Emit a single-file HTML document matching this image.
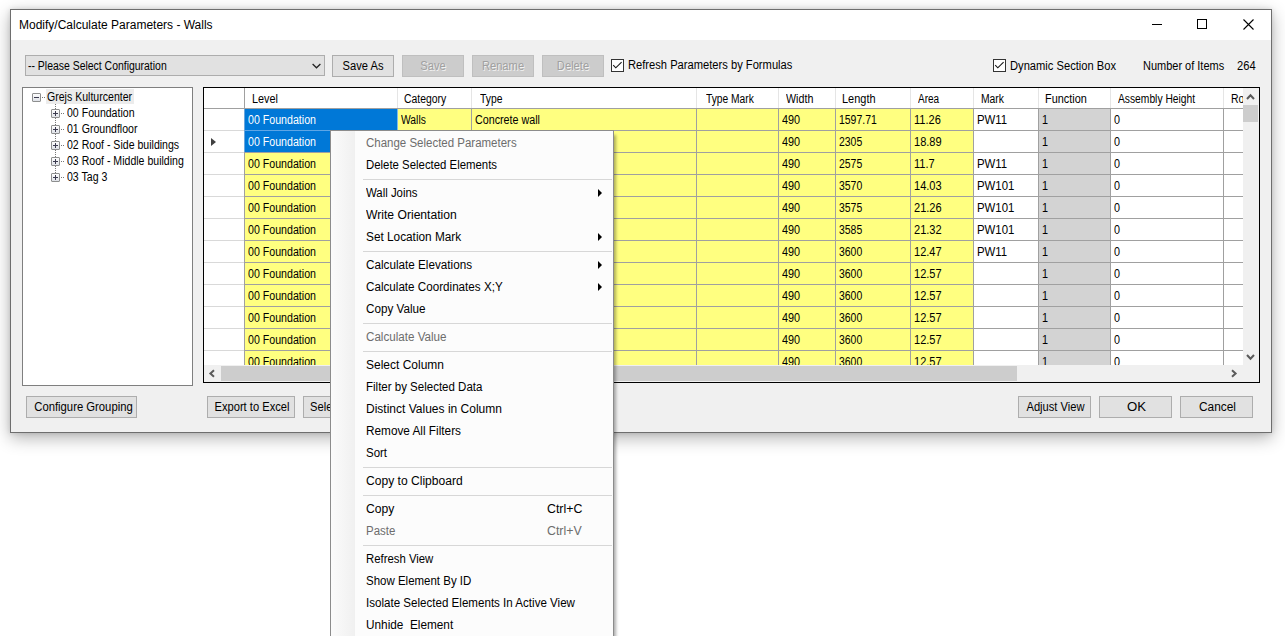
<!DOCTYPE html><html><head><meta charset="utf-8"><style>
*{margin:0;padding:0;box-sizing:border-box}
html,body{width:1285px;height:636px;overflow:hidden;background:#fff;font-family:"Liberation Sans",sans-serif;color:#000}
.a{position:absolute}
.t{position:absolute;white-space:pre;font-size:12px;line-height:12px;transform-origin:0 0}
.btn{position:absolute;height:22px;background:#e1e1e1;border:1px solid #adadad}
.dis{background:#cccccc;border-color:#bfbfbf}
.chk{position:absolute;width:13px;height:13px;border:1px solid #333;background:#fff}
.mi{position:absolute;left:366px;font-size:12px;line-height:22px;white-space:pre;transform-origin:0 0}
.sep{position:absolute;left:363px;width:249px;height:1px;background:#d7d7d7}
.arr{position:absolute;left:598px;width:0;height:0;border-top:4px solid transparent;border-bottom:4px solid transparent;border-left:4px solid #000}
</style></head><body>
<div class="a" style="left:10px;top:9px;width:1262px;height:424px;box-shadow:0 5px 16px rgba(0,0,0,0.30), 0 0 5px rgba(0,0,0,0.12)"></div>
<div class="a" style="left:10px;top:9px;width:1262px;height:424px;border:1px solid #6e6e6e;background:#f0f0f0"></div>
<div class="a" style="left:11px;top:10px;width:1260px;height:30px;background:#fff"></div>
<div class="t" style="left:19px;top:19px;">Modify/Calculate Parameters - Walls</div>
<div class="a" style="left:1152px;top:24px;width:10px;height:1px;background:#000"></div>
<div class="a" style="left:1197px;top:19px;width:10px;height:10px;border:1px solid #000"></div>
<svg class="a" style="left:1243px;top:19px" width="11" height="11" viewBox="0 0 11 11"><path d="M0.5 0.5L10.5 10.5M10.5 0.5L0.5 10.5" stroke="#000" stroke-width="1.1" fill="none"/></svg>
<div class="a" style="left:25px;top:55px;width:300px;height:21px;background:#e1e1e1;border:1px solid #adadad"></div>
<div class="t" style="left:28px;top:60px;transform:scaleX(0.87);">-- Please Select Configuration</div>
<svg class="a" style="left:312px;top:63px" width="9" height="6" viewBox="0 0 9 6"><path d="M0.6 1L4.5 4.8L8.4 1" stroke="#222" stroke-width="1.25" fill="none"/></svg>
<div class="btn" style="left:332px;top:55px;width:62px"></div>
<div class="t" style="left:332px;top:60px;width:62px;text-align:center;transform:scaleX(0.93);transform-origin:50% 0;color:#000;">Save As</div>
<div class="btn dis" style="left:402px;top:55px;width:62px"></div>
<div class="t" style="left:402px;top:60px;width:62px;text-align:center;transform:scaleX(0.93);transform-origin:50% 0;color:#a0a0a0;text-shadow:1px 1px 0 #f2f2f2;">Save</div>
<div class="btn dis" style="left:472px;top:55px;width:62px"></div>
<div class="t" style="left:472px;top:60px;width:62px;text-align:center;transform:scaleX(0.93);transform-origin:50% 0;color:#a0a0a0;text-shadow:1px 1px 0 #f2f2f2;">Rename</div>
<div class="btn dis" style="left:542px;top:55px;width:62px"></div>
<div class="t" style="left:542px;top:60px;width:62px;text-align:center;transform:scaleX(0.93);transform-origin:50% 0;color:#a0a0a0;text-shadow:1px 1px 0 #f2f2f2;">Delete</div>
<div class="chk" style="left:611px;top:59px"></div>
<svg class="a" style="left:611px;top:59px" width="13" height="13" viewBox="0 0 13 13"><path d="M2.2 6.2L4.8 8.8L10.6 3.2" stroke="#1a1a1a" stroke-width="1.15" fill="none"/></svg>
<div class="t" style="left:628px;top:59px;transform:scaleX(0.93);">Refresh Parameters by Formulas</div>
<div class="chk" style="left:993px;top:59px"></div>
<svg class="a" style="left:993px;top:59px" width="13" height="13" viewBox="0 0 13 13"><path d="M2.2 6.2L4.8 8.8L10.6 3.2" stroke="#1a1a1a" stroke-width="1.15" fill="none"/></svg>
<div class="t" style="left:1009.5px;top:60px;transform:scaleX(0.93);">Dynamic Section Box</div>
<div class="t" style="left:1143px;top:60px;transform:scaleX(0.915);">Number of Items</div>
<div class="t" style="left:1236.5px;top:60px;transform:scaleX(0.93);">264</div>
<div class="a" style="left:22px;top:87px;width:171px;height:299px;background:#fff;border:1px solid #7f7f7f"></div>
<div class="a" style="left:46px;top:89px;width:88px;height:15px;background:#ececec"></div>
<div class="a" style="left:32px;top:93px;width:9px;height:9px;border:1px solid #8e8f8f;border-radius:1px;background:linear-gradient(#fdfdfd,#dfe2e8)"></div>
<div class="a" style="left:34px;top:97px;width:5px;height:1px;background:#3b3b4f"></div>
<div class="a" style="left:42px;top:97px;width:4px;height:1px;background:repeating-linear-gradient(90deg,#777 0 1px,transparent 1px 2px)"></div>
<div class="t" style="left:47px;top:91px;transform:scaleX(0.88);">Grejs Kulturcenter</div>
<div class="a" style="left:55px;top:104px;width:1px;height:73px;background:repeating-linear-gradient(180deg,#777 0 1px,transparent 1px 2px)"></div>
<div class="a" style="left:51px;top:109px;width:9px;height:9px;border:1px solid #8e8f8f;border-radius:1px;background:linear-gradient(#fdfdfd,#dfe2e8)"></div>
<div class="a" style="left:53px;top:113px;width:5px;height:1px;background:#3b3b4f"></div>
<div class="a" style="left:55px;top:111px;width:1px;height:5px;background:#3b3b4f"></div>
<div class="a" style="left:61px;top:113px;width:4px;height:1px;background:repeating-linear-gradient(90deg,#777 0 1px,transparent 1px 2px)"></div>
<div class="t" style="left:66.5px;top:107px;transform:scaleX(0.88);">00 Foundation</div>
<div class="a" style="left:51px;top:125px;width:9px;height:9px;border:1px solid #8e8f8f;border-radius:1px;background:linear-gradient(#fdfdfd,#dfe2e8)"></div>
<div class="a" style="left:53px;top:129px;width:5px;height:1px;background:#3b3b4f"></div>
<div class="a" style="left:55px;top:127px;width:1px;height:5px;background:#3b3b4f"></div>
<div class="a" style="left:61px;top:129px;width:4px;height:1px;background:repeating-linear-gradient(90deg,#777 0 1px,transparent 1px 2px)"></div>
<div class="t" style="left:66.5px;top:123px;transform:scaleX(0.88);">01 Groundfloor</div>
<div class="a" style="left:51px;top:141px;width:9px;height:9px;border:1px solid #8e8f8f;border-radius:1px;background:linear-gradient(#fdfdfd,#dfe2e8)"></div>
<div class="a" style="left:53px;top:145px;width:5px;height:1px;background:#3b3b4f"></div>
<div class="a" style="left:55px;top:143px;width:1px;height:5px;background:#3b3b4f"></div>
<div class="a" style="left:61px;top:145px;width:4px;height:1px;background:repeating-linear-gradient(90deg,#777 0 1px,transparent 1px 2px)"></div>
<div class="t" style="left:66.5px;top:139px;transform:scaleX(0.88);">02 Roof - Side buildings</div>
<div class="a" style="left:51px;top:157px;width:9px;height:9px;border:1px solid #8e8f8f;border-radius:1px;background:linear-gradient(#fdfdfd,#dfe2e8)"></div>
<div class="a" style="left:53px;top:161px;width:5px;height:1px;background:#3b3b4f"></div>
<div class="a" style="left:55px;top:159px;width:1px;height:5px;background:#3b3b4f"></div>
<div class="a" style="left:61px;top:161px;width:4px;height:1px;background:repeating-linear-gradient(90deg,#777 0 1px,transparent 1px 2px)"></div>
<div class="t" style="left:66.5px;top:155px;transform:scaleX(0.88);">03 Roof - Middle building</div>
<div class="a" style="left:51px;top:173px;width:9px;height:9px;border:1px solid #8e8f8f;border-radius:1px;background:linear-gradient(#fdfdfd,#dfe2e8)"></div>
<div class="a" style="left:53px;top:177px;width:5px;height:1px;background:#3b3b4f"></div>
<div class="a" style="left:55px;top:175px;width:1px;height:5px;background:#3b3b4f"></div>
<div class="a" style="left:61px;top:177px;width:4px;height:1px;background:repeating-linear-gradient(90deg,#777 0 1px,transparent 1px 2px)"></div>
<div class="t" style="left:66.5px;top:171px;transform:scaleX(0.88);">03 Tag 3</div>
<div class="btn" style="left:26px;top:396px;width:111px"></div>
<div class="t" style="left:27.5px;top:401px;width:111px;text-align:center;transform:scaleX(0.94);transform-origin:50% 0;color:#000;">Configure Grouping</div>
<div class="btn" style="left:207px;top:396px;width:88px"></div>
<div class="t" style="left:207.5px;top:401px;width:88px;text-align:center;transform:scaleX(0.93);transform-origin:50% 0;color:#000;">Export to Excel</div>
<div class="btn" style="left:1018px;top:396px;width:73px"></div>
<div class="t" style="left:1018.5px;top:401px;width:73px;text-align:center;transform:scaleX(0.93);transform-origin:50% 0;color:#000;">Adjust View</div>
<div class="btn" style="left:1099px;top:396px;width:73px"></div>
<div class="t" style="left:1099.5px;top:401px;width:73px;text-align:center;transform:scaleX(1.1);transform-origin:50% 0;color:#000;">OK</div>
<div class="btn" style="left:1180px;top:396px;width:73px"></div>
<div class="t" style="left:1181px;top:401px;width:73px;text-align:center;transform:scaleX(0.99);transform-origin:50% 0;color:#000;">Cancel</div>
<div class="btn" style="left:303px;top:396px;width:120px"></div>
<div class="t" style="left:310px;top:401px;transform:scaleX(0.93);color:#000;">Select Elements</div>
<div class="a" style="left:203px;top:87px;width:1057px;height:296px;background:#fff;border:1px solid #000"></div>
<div class="a" style="left:204px;top:88px;width:1039px;height:277px;overflow:hidden">
<div class="a" style="left:0;top:0;width:1100px;height:20px;background:#fff"></div>
<div class="a" style="left:40px;top:0;width:1px;height:20px;background:#a0a0a0"></div>
<div class="a" style="left:193px;top:0;width:1px;height:20px;background:#e5e5e5"></div>
<div class="t" style="left:47.900000000000006px;top:5px;transform:scaleX(0.904);">Level</div>
<div class="a" style="left:267px;top:0;width:1px;height:20px;background:#e5e5e5"></div>
<div class="t" style="left:200.2px;top:5px;transform:scaleX(0.867);">Category</div>
<div class="a" style="left:492px;top:0;width:1px;height:20px;background:#e5e5e5"></div>
<div class="t" style="left:275.5px;top:5px;transform:scaleX(0.862);">Type</div>
<div class="a" style="left:574px;top:0;width:1px;height:20px;background:#e5e5e5"></div>
<div class="t" style="left:501.5px;top:5px;transform:scaleX(0.854);">Type Mark</div>
<div class="a" style="left:631px;top:0;width:1px;height:20px;background:#e5e5e5"></div>
<div class="t" style="left:582.0px;top:5px;transform:scaleX(0.893);">Width</div>
<div class="a" style="left:706px;top:0;width:1px;height:20px;background:#e5e5e5"></div>
<div class="t" style="left:638.3px;top:5px;transform:scaleX(0.914);">Length</div>
<div class="a" style="left:769px;top:0;width:1px;height:20px;background:#e5e5e5"></div>
<div class="t" style="left:714.4px;top:5px;transform:scaleX(0.832);">Area</div>
<div class="a" style="left:834px;top:0;width:1px;height:20px;background:#e5e5e5"></div>
<div class="t" style="left:776.7px;top:5px;transform:scaleX(0.862);">Mark</div>
<div class="a" style="left:906px;top:0;width:1px;height:20px;background:#e5e5e5"></div>
<div class="t" style="left:841.3px;top:5px;transform:scaleX(0.907);">Function</div>
<div class="a" style="left:1019px;top:0;width:1px;height:20px;background:#e5e5e5"></div>
<div class="t" style="left:914px;top:5px;transform:scaleX(0.856);">Assembly Height</div>
<div class="a" style="left:1086px;top:0;width:1px;height:20px;background:#e5e5e5"></div>
<div class="t" style="left:1026.8px;top:5px;transform:scaleX(0.87);">Rotation</div>
<div class="a" style="left:0;top:20px;width:1100px;height:1px;background:#a0a0a0"></div>
<div class="a" style="left:0;top:42px;width:40px;height:1px;background:#d9d9d9"></div>
<div class="a" style="left:41px;top:21px;width:153px;height:21px;background:#0078d7"></div>
<div class="t" style="left:43.5px;top:26px;transform:scaleX(0.886);color:#fff;">00 Foundation</div>
<div class="a" style="left:194px;top:21px;width:74px;height:21px;background:#ffff80"></div>
<div class="t" style="left:196.5px;top:26px;transform:scaleX(0.86);">Walls</div>
<div class="a" style="left:268px;top:21px;width:225px;height:21px;background:#ffff80"></div>
<div class="t" style="left:270.5px;top:26px;transform:scaleX(0.894);">Concrete wall</div>
<div class="a" style="left:493px;top:21px;width:82px;height:21px;background:#ffff80"></div>
<div class="a" style="left:575px;top:21px;width:57px;height:21px;background:#ffff80"></div>
<div class="t" style="left:577.5px;top:26px;transform:scaleX(0.905);">490</div>
<div class="a" style="left:632px;top:21px;width:75px;height:21px;background:#ffff80"></div>
<div class="t" style="left:634.5px;top:26px;transform:scaleX(0.87);">1597.71</div>
<div class="a" style="left:707px;top:21px;width:63px;height:21px;background:#ffff80"></div>
<div class="t" style="left:709.5px;top:26px;transform:scaleX(0.92);">11.26</div>
<div class="a" style="left:770px;top:21px;width:65px;height:21px;background:#fff"></div>
<div class="t" style="left:772.5px;top:26px;transform:scaleX(0.95);">PW11</div>
<div class="a" style="left:835px;top:21px;width:72px;height:21px;background:#d3d3d3"></div>
<div class="t" style="left:837.5px;top:26px;transform:scaleX(0.9);">1</div>
<div class="a" style="left:907px;top:21px;width:113px;height:21px;background:#fff"></div>
<div class="t" style="left:909.5px;top:26px;transform:scaleX(0.9);">0</div>
<div class="a" style="left:1020px;top:21px;width:67px;height:21px;background:#fff"></div>
<div class="a" style="left:41px;top:42px;width:1100px;height:1px;background:#a0a0a0"></div>
<div class="a" style="left:0;top:64px;width:40px;height:1px;background:#d9d9d9"></div>
<div class="a" style="left:41px;top:43px;width:153px;height:21px;background:#0078d7"></div>
<div class="t" style="left:43.5px;top:48px;transform:scaleX(0.886);color:#fff;">00 Foundation</div>
<div class="a" style="left:194px;top:43px;width:74px;height:21px;background:#ffff80"></div>
<div class="a" style="left:268px;top:43px;width:225px;height:21px;background:#ffff80"></div>
<div class="a" style="left:493px;top:43px;width:82px;height:21px;background:#ffff80"></div>
<div class="a" style="left:575px;top:43px;width:57px;height:21px;background:#ffff80"></div>
<div class="t" style="left:577.5px;top:48px;transform:scaleX(0.905);">490</div>
<div class="a" style="left:632px;top:43px;width:75px;height:21px;background:#ffff80"></div>
<div class="t" style="left:634.5px;top:48px;transform:scaleX(0.87);">2305</div>
<div class="a" style="left:707px;top:43px;width:63px;height:21px;background:#ffff80"></div>
<div class="t" style="left:709.5px;top:48px;transform:scaleX(0.92);">18.89</div>
<div class="a" style="left:770px;top:43px;width:65px;height:21px;background:#fff"></div>
<div class="a" style="left:835px;top:43px;width:72px;height:21px;background:#d3d3d3"></div>
<div class="t" style="left:837.5px;top:48px;transform:scaleX(0.9);">1</div>
<div class="a" style="left:907px;top:43px;width:113px;height:21px;background:#fff"></div>
<div class="t" style="left:909.5px;top:48px;transform:scaleX(0.9);">0</div>
<div class="a" style="left:1020px;top:43px;width:67px;height:21px;background:#fff"></div>
<div class="a" style="left:41px;top:64px;width:1100px;height:1px;background:#a0a0a0"></div>
<div class="a" style="left:0;top:86px;width:40px;height:1px;background:#d9d9d9"></div>
<div class="a" style="left:41px;top:65px;width:153px;height:21px;background:#ffff80"></div>
<div class="t" style="left:43.5px;top:70px;transform:scaleX(0.886);">00 Foundation</div>
<div class="a" style="left:194px;top:65px;width:74px;height:21px;background:#ffff80"></div>
<div class="a" style="left:268px;top:65px;width:225px;height:21px;background:#ffff80"></div>
<div class="a" style="left:493px;top:65px;width:82px;height:21px;background:#ffff80"></div>
<div class="a" style="left:575px;top:65px;width:57px;height:21px;background:#ffff80"></div>
<div class="t" style="left:577.5px;top:70px;transform:scaleX(0.905);">490</div>
<div class="a" style="left:632px;top:65px;width:75px;height:21px;background:#ffff80"></div>
<div class="t" style="left:634.5px;top:70px;transform:scaleX(0.87);">2575</div>
<div class="a" style="left:707px;top:65px;width:63px;height:21px;background:#ffff80"></div>
<div class="t" style="left:709.5px;top:70px;transform:scaleX(0.92);">11.7</div>
<div class="a" style="left:770px;top:65px;width:65px;height:21px;background:#fff"></div>
<div class="t" style="left:772.5px;top:70px;transform:scaleX(0.95);">PW11</div>
<div class="a" style="left:835px;top:65px;width:72px;height:21px;background:#d3d3d3"></div>
<div class="t" style="left:837.5px;top:70px;transform:scaleX(0.9);">1</div>
<div class="a" style="left:907px;top:65px;width:113px;height:21px;background:#fff"></div>
<div class="t" style="left:909.5px;top:70px;transform:scaleX(0.9);">0</div>
<div class="a" style="left:1020px;top:65px;width:67px;height:21px;background:#fff"></div>
<div class="a" style="left:41px;top:86px;width:1100px;height:1px;background:#a0a0a0"></div>
<div class="a" style="left:0;top:108px;width:40px;height:1px;background:#d9d9d9"></div>
<div class="a" style="left:41px;top:87px;width:153px;height:21px;background:#ffff80"></div>
<div class="t" style="left:43.5px;top:92px;transform:scaleX(0.886);">00 Foundation</div>
<div class="a" style="left:194px;top:87px;width:74px;height:21px;background:#ffff80"></div>
<div class="a" style="left:268px;top:87px;width:225px;height:21px;background:#ffff80"></div>
<div class="a" style="left:493px;top:87px;width:82px;height:21px;background:#ffff80"></div>
<div class="a" style="left:575px;top:87px;width:57px;height:21px;background:#ffff80"></div>
<div class="t" style="left:577.5px;top:92px;transform:scaleX(0.905);">490</div>
<div class="a" style="left:632px;top:87px;width:75px;height:21px;background:#ffff80"></div>
<div class="t" style="left:634.5px;top:92px;transform:scaleX(0.87);">3570</div>
<div class="a" style="left:707px;top:87px;width:63px;height:21px;background:#ffff80"></div>
<div class="t" style="left:709.5px;top:92px;transform:scaleX(0.92);">14.03</div>
<div class="a" style="left:770px;top:87px;width:65px;height:21px;background:#fff"></div>
<div class="t" style="left:772.5px;top:92px;transform:scaleX(0.95);">PW101</div>
<div class="a" style="left:835px;top:87px;width:72px;height:21px;background:#d3d3d3"></div>
<div class="t" style="left:837.5px;top:92px;transform:scaleX(0.9);">1</div>
<div class="a" style="left:907px;top:87px;width:113px;height:21px;background:#fff"></div>
<div class="t" style="left:909.5px;top:92px;transform:scaleX(0.9);">0</div>
<div class="a" style="left:1020px;top:87px;width:67px;height:21px;background:#fff"></div>
<div class="a" style="left:41px;top:108px;width:1100px;height:1px;background:#a0a0a0"></div>
<div class="a" style="left:0;top:130px;width:40px;height:1px;background:#d9d9d9"></div>
<div class="a" style="left:41px;top:109px;width:153px;height:21px;background:#ffff80"></div>
<div class="t" style="left:43.5px;top:114px;transform:scaleX(0.886);">00 Foundation</div>
<div class="a" style="left:194px;top:109px;width:74px;height:21px;background:#ffff80"></div>
<div class="a" style="left:268px;top:109px;width:225px;height:21px;background:#ffff80"></div>
<div class="a" style="left:493px;top:109px;width:82px;height:21px;background:#ffff80"></div>
<div class="a" style="left:575px;top:109px;width:57px;height:21px;background:#ffff80"></div>
<div class="t" style="left:577.5px;top:114px;transform:scaleX(0.905);">490</div>
<div class="a" style="left:632px;top:109px;width:75px;height:21px;background:#ffff80"></div>
<div class="t" style="left:634.5px;top:114px;transform:scaleX(0.87);">3575</div>
<div class="a" style="left:707px;top:109px;width:63px;height:21px;background:#ffff80"></div>
<div class="t" style="left:709.5px;top:114px;transform:scaleX(0.92);">21.26</div>
<div class="a" style="left:770px;top:109px;width:65px;height:21px;background:#fff"></div>
<div class="t" style="left:772.5px;top:114px;transform:scaleX(0.95);">PW101</div>
<div class="a" style="left:835px;top:109px;width:72px;height:21px;background:#d3d3d3"></div>
<div class="t" style="left:837.5px;top:114px;transform:scaleX(0.9);">1</div>
<div class="a" style="left:907px;top:109px;width:113px;height:21px;background:#fff"></div>
<div class="t" style="left:909.5px;top:114px;transform:scaleX(0.9);">0</div>
<div class="a" style="left:1020px;top:109px;width:67px;height:21px;background:#fff"></div>
<div class="a" style="left:41px;top:130px;width:1100px;height:1px;background:#a0a0a0"></div>
<div class="a" style="left:0;top:152px;width:40px;height:1px;background:#d9d9d9"></div>
<div class="a" style="left:41px;top:131px;width:153px;height:21px;background:#ffff80"></div>
<div class="t" style="left:43.5px;top:136px;transform:scaleX(0.886);">00 Foundation</div>
<div class="a" style="left:194px;top:131px;width:74px;height:21px;background:#ffff80"></div>
<div class="a" style="left:268px;top:131px;width:225px;height:21px;background:#ffff80"></div>
<div class="a" style="left:493px;top:131px;width:82px;height:21px;background:#ffff80"></div>
<div class="a" style="left:575px;top:131px;width:57px;height:21px;background:#ffff80"></div>
<div class="t" style="left:577.5px;top:136px;transform:scaleX(0.905);">490</div>
<div class="a" style="left:632px;top:131px;width:75px;height:21px;background:#ffff80"></div>
<div class="t" style="left:634.5px;top:136px;transform:scaleX(0.87);">3585</div>
<div class="a" style="left:707px;top:131px;width:63px;height:21px;background:#ffff80"></div>
<div class="t" style="left:709.5px;top:136px;transform:scaleX(0.92);">21.32</div>
<div class="a" style="left:770px;top:131px;width:65px;height:21px;background:#fff"></div>
<div class="t" style="left:772.5px;top:136px;transform:scaleX(0.95);">PW101</div>
<div class="a" style="left:835px;top:131px;width:72px;height:21px;background:#d3d3d3"></div>
<div class="t" style="left:837.5px;top:136px;transform:scaleX(0.9);">1</div>
<div class="a" style="left:907px;top:131px;width:113px;height:21px;background:#fff"></div>
<div class="t" style="left:909.5px;top:136px;transform:scaleX(0.9);">0</div>
<div class="a" style="left:1020px;top:131px;width:67px;height:21px;background:#fff"></div>
<div class="a" style="left:41px;top:152px;width:1100px;height:1px;background:#a0a0a0"></div>
<div class="a" style="left:0;top:174px;width:40px;height:1px;background:#d9d9d9"></div>
<div class="a" style="left:41px;top:153px;width:153px;height:21px;background:#ffff80"></div>
<div class="t" style="left:43.5px;top:158px;transform:scaleX(0.886);">00 Foundation</div>
<div class="a" style="left:194px;top:153px;width:74px;height:21px;background:#ffff80"></div>
<div class="a" style="left:268px;top:153px;width:225px;height:21px;background:#ffff80"></div>
<div class="a" style="left:493px;top:153px;width:82px;height:21px;background:#ffff80"></div>
<div class="a" style="left:575px;top:153px;width:57px;height:21px;background:#ffff80"></div>
<div class="t" style="left:577.5px;top:158px;transform:scaleX(0.905);">490</div>
<div class="a" style="left:632px;top:153px;width:75px;height:21px;background:#ffff80"></div>
<div class="t" style="left:634.5px;top:158px;transform:scaleX(0.87);">3600</div>
<div class="a" style="left:707px;top:153px;width:63px;height:21px;background:#ffff80"></div>
<div class="t" style="left:709.5px;top:158px;transform:scaleX(0.92);">12.47</div>
<div class="a" style="left:770px;top:153px;width:65px;height:21px;background:#fff"></div>
<div class="t" style="left:772.5px;top:158px;transform:scaleX(0.95);">PW11</div>
<div class="a" style="left:835px;top:153px;width:72px;height:21px;background:#d3d3d3"></div>
<div class="t" style="left:837.5px;top:158px;transform:scaleX(0.9);">1</div>
<div class="a" style="left:907px;top:153px;width:113px;height:21px;background:#fff"></div>
<div class="t" style="left:909.5px;top:158px;transform:scaleX(0.9);">0</div>
<div class="a" style="left:1020px;top:153px;width:67px;height:21px;background:#fff"></div>
<div class="a" style="left:41px;top:174px;width:1100px;height:1px;background:#a0a0a0"></div>
<div class="a" style="left:0;top:196px;width:40px;height:1px;background:#d9d9d9"></div>
<div class="a" style="left:41px;top:175px;width:153px;height:21px;background:#ffff80"></div>
<div class="t" style="left:43.5px;top:180px;transform:scaleX(0.886);">00 Foundation</div>
<div class="a" style="left:194px;top:175px;width:74px;height:21px;background:#ffff80"></div>
<div class="a" style="left:268px;top:175px;width:225px;height:21px;background:#ffff80"></div>
<div class="a" style="left:493px;top:175px;width:82px;height:21px;background:#ffff80"></div>
<div class="a" style="left:575px;top:175px;width:57px;height:21px;background:#ffff80"></div>
<div class="t" style="left:577.5px;top:180px;transform:scaleX(0.905);">490</div>
<div class="a" style="left:632px;top:175px;width:75px;height:21px;background:#ffff80"></div>
<div class="t" style="left:634.5px;top:180px;transform:scaleX(0.87);">3600</div>
<div class="a" style="left:707px;top:175px;width:63px;height:21px;background:#ffff80"></div>
<div class="t" style="left:709.5px;top:180px;transform:scaleX(0.92);">12.57</div>
<div class="a" style="left:770px;top:175px;width:65px;height:21px;background:#fff"></div>
<div class="a" style="left:835px;top:175px;width:72px;height:21px;background:#d3d3d3"></div>
<div class="t" style="left:837.5px;top:180px;transform:scaleX(0.9);">1</div>
<div class="a" style="left:907px;top:175px;width:113px;height:21px;background:#fff"></div>
<div class="t" style="left:909.5px;top:180px;transform:scaleX(0.9);">0</div>
<div class="a" style="left:1020px;top:175px;width:67px;height:21px;background:#fff"></div>
<div class="a" style="left:41px;top:196px;width:1100px;height:1px;background:#a0a0a0"></div>
<div class="a" style="left:0;top:218px;width:40px;height:1px;background:#d9d9d9"></div>
<div class="a" style="left:41px;top:197px;width:153px;height:21px;background:#ffff80"></div>
<div class="t" style="left:43.5px;top:202px;transform:scaleX(0.886);">00 Foundation</div>
<div class="a" style="left:194px;top:197px;width:74px;height:21px;background:#ffff80"></div>
<div class="a" style="left:268px;top:197px;width:225px;height:21px;background:#ffff80"></div>
<div class="a" style="left:493px;top:197px;width:82px;height:21px;background:#ffff80"></div>
<div class="a" style="left:575px;top:197px;width:57px;height:21px;background:#ffff80"></div>
<div class="t" style="left:577.5px;top:202px;transform:scaleX(0.905);">490</div>
<div class="a" style="left:632px;top:197px;width:75px;height:21px;background:#ffff80"></div>
<div class="t" style="left:634.5px;top:202px;transform:scaleX(0.87);">3600</div>
<div class="a" style="left:707px;top:197px;width:63px;height:21px;background:#ffff80"></div>
<div class="t" style="left:709.5px;top:202px;transform:scaleX(0.92);">12.57</div>
<div class="a" style="left:770px;top:197px;width:65px;height:21px;background:#fff"></div>
<div class="a" style="left:835px;top:197px;width:72px;height:21px;background:#d3d3d3"></div>
<div class="t" style="left:837.5px;top:202px;transform:scaleX(0.9);">1</div>
<div class="a" style="left:907px;top:197px;width:113px;height:21px;background:#fff"></div>
<div class="t" style="left:909.5px;top:202px;transform:scaleX(0.9);">0</div>
<div class="a" style="left:1020px;top:197px;width:67px;height:21px;background:#fff"></div>
<div class="a" style="left:41px;top:218px;width:1100px;height:1px;background:#a0a0a0"></div>
<div class="a" style="left:0;top:240px;width:40px;height:1px;background:#d9d9d9"></div>
<div class="a" style="left:41px;top:219px;width:153px;height:21px;background:#ffff80"></div>
<div class="t" style="left:43.5px;top:224px;transform:scaleX(0.886);">00 Foundation</div>
<div class="a" style="left:194px;top:219px;width:74px;height:21px;background:#ffff80"></div>
<div class="a" style="left:268px;top:219px;width:225px;height:21px;background:#ffff80"></div>
<div class="a" style="left:493px;top:219px;width:82px;height:21px;background:#ffff80"></div>
<div class="a" style="left:575px;top:219px;width:57px;height:21px;background:#ffff80"></div>
<div class="t" style="left:577.5px;top:224px;transform:scaleX(0.905);">490</div>
<div class="a" style="left:632px;top:219px;width:75px;height:21px;background:#ffff80"></div>
<div class="t" style="left:634.5px;top:224px;transform:scaleX(0.87);">3600</div>
<div class="a" style="left:707px;top:219px;width:63px;height:21px;background:#ffff80"></div>
<div class="t" style="left:709.5px;top:224px;transform:scaleX(0.92);">12.57</div>
<div class="a" style="left:770px;top:219px;width:65px;height:21px;background:#fff"></div>
<div class="a" style="left:835px;top:219px;width:72px;height:21px;background:#d3d3d3"></div>
<div class="t" style="left:837.5px;top:224px;transform:scaleX(0.9);">1</div>
<div class="a" style="left:907px;top:219px;width:113px;height:21px;background:#fff"></div>
<div class="t" style="left:909.5px;top:224px;transform:scaleX(0.9);">0</div>
<div class="a" style="left:1020px;top:219px;width:67px;height:21px;background:#fff"></div>
<div class="a" style="left:41px;top:240px;width:1100px;height:1px;background:#a0a0a0"></div>
<div class="a" style="left:0;top:262px;width:40px;height:1px;background:#d9d9d9"></div>
<div class="a" style="left:41px;top:241px;width:153px;height:21px;background:#ffff80"></div>
<div class="t" style="left:43.5px;top:246px;transform:scaleX(0.886);">00 Foundation</div>
<div class="a" style="left:194px;top:241px;width:74px;height:21px;background:#ffff80"></div>
<div class="a" style="left:268px;top:241px;width:225px;height:21px;background:#ffff80"></div>
<div class="a" style="left:493px;top:241px;width:82px;height:21px;background:#ffff80"></div>
<div class="a" style="left:575px;top:241px;width:57px;height:21px;background:#ffff80"></div>
<div class="t" style="left:577.5px;top:246px;transform:scaleX(0.905);">490</div>
<div class="a" style="left:632px;top:241px;width:75px;height:21px;background:#ffff80"></div>
<div class="t" style="left:634.5px;top:246px;transform:scaleX(0.87);">3600</div>
<div class="a" style="left:707px;top:241px;width:63px;height:21px;background:#ffff80"></div>
<div class="t" style="left:709.5px;top:246px;transform:scaleX(0.92);">12.57</div>
<div class="a" style="left:770px;top:241px;width:65px;height:21px;background:#fff"></div>
<div class="a" style="left:835px;top:241px;width:72px;height:21px;background:#d3d3d3"></div>
<div class="t" style="left:837.5px;top:246px;transform:scaleX(0.9);">1</div>
<div class="a" style="left:907px;top:241px;width:113px;height:21px;background:#fff"></div>
<div class="t" style="left:909.5px;top:246px;transform:scaleX(0.9);">0</div>
<div class="a" style="left:1020px;top:241px;width:67px;height:21px;background:#fff"></div>
<div class="a" style="left:41px;top:262px;width:1100px;height:1px;background:#a0a0a0"></div>
<div class="a" style="left:0;top:284px;width:40px;height:1px;background:#d9d9d9"></div>
<div class="a" style="left:41px;top:263px;width:153px;height:21px;background:#ffff80"></div>
<div class="t" style="left:43.5px;top:268px;transform:scaleX(0.886);">00 Foundation</div>
<div class="a" style="left:194px;top:263px;width:74px;height:21px;background:#ffff80"></div>
<div class="a" style="left:268px;top:263px;width:225px;height:21px;background:#ffff80"></div>
<div class="a" style="left:493px;top:263px;width:82px;height:21px;background:#ffff80"></div>
<div class="a" style="left:575px;top:263px;width:57px;height:21px;background:#ffff80"></div>
<div class="t" style="left:577.5px;top:268px;transform:scaleX(0.905);">490</div>
<div class="a" style="left:632px;top:263px;width:75px;height:21px;background:#ffff80"></div>
<div class="t" style="left:634.5px;top:268px;transform:scaleX(0.87);">3600</div>
<div class="a" style="left:707px;top:263px;width:63px;height:21px;background:#ffff80"></div>
<div class="t" style="left:709.5px;top:268px;transform:scaleX(0.92);">12.57</div>
<div class="a" style="left:770px;top:263px;width:65px;height:21px;background:#fff"></div>
<div class="a" style="left:835px;top:263px;width:72px;height:21px;background:#d3d3d3"></div>
<div class="t" style="left:837.5px;top:268px;transform:scaleX(0.9);">1</div>
<div class="a" style="left:907px;top:263px;width:113px;height:21px;background:#fff"></div>
<div class="t" style="left:909.5px;top:268px;transform:scaleX(0.9);">0</div>
<div class="a" style="left:1020px;top:263px;width:67px;height:21px;background:#fff"></div>
<div class="a" style="left:41px;top:284px;width:1100px;height:1px;background:#a0a0a0"></div>
<div class="a" style="left:41px;top:42px;width:152px;height:1px;background:#5ea6e6"></div>
<div class="a" style="left:193px;top:21px;width:1px;height:300px;background:#a0a0a0"></div>
<div class="a" style="left:267px;top:21px;width:1px;height:300px;background:#a0a0a0"></div>
<div class="a" style="left:492px;top:21px;width:1px;height:300px;background:#a0a0a0"></div>
<div class="a" style="left:574px;top:21px;width:1px;height:300px;background:#a0a0a0"></div>
<div class="a" style="left:631px;top:21px;width:1px;height:300px;background:#a0a0a0"></div>
<div class="a" style="left:706px;top:21px;width:1px;height:300px;background:#a0a0a0"></div>
<div class="a" style="left:769px;top:21px;width:1px;height:300px;background:#a0a0a0"></div>
<div class="a" style="left:834px;top:21px;width:1px;height:300px;background:#a0a0a0"></div>
<div class="a" style="left:906px;top:21px;width:1px;height:300px;background:#a0a0a0"></div>
<div class="a" style="left:1019px;top:21px;width:1px;height:300px;background:#a0a0a0"></div>
<div class="a" style="left:1086px;top:21px;width:1px;height:300px;background:#a0a0a0"></div>
<div class="a" style="left:193px;top:21px;width:1px;height:43px;background:#7fb9e8"></div>
<div class="a" style="left:40px;top:21px;width:1px;height:300px;background:#a0a0a0"></div>
<div class="a" style="left:40px;top:21px;width:1px;height:43px;background:#6aa6dc"></div>
<div class="a" style="left:7px;top:50px;width:0;height:0;border-top:4.5px solid transparent;border-bottom:4.5px solid transparent;border-left:5px solid #404040"></div>
</div>
<div class="a" style="left:1243px;top:88px;width:16px;height:278px;background:#f0f0f0"></div>
<div class="a" style="left:1243px;top:105px;width:15px;height:17px;background:#cdcdcd"></div>
<svg class="a" style="left:1246px;top:93px" width="9" height="7" viewBox="0 0 9 7"><path d="M1 6L4.5 2.2L8 6" stroke="#5a5a5a" stroke-width="2" fill="none"/></svg>
<svg class="a" style="left:1246px;top:354px" width="9" height="7" viewBox="0 0 9 7"><path d="M1 1L4.5 4.8L8 1" stroke="#5a5a5a" stroke-width="2" fill="none"/></svg>
<div class="a" style="left:204px;top:365px;width:1055px;height:17px;background:#f0f0f0"></div>
<div class="a" style="left:221px;top:366px;width:796px;height:15px;background:#cdcdcd"></div>
<svg class="a" style="left:208px;top:369px" width="7" height="9" viewBox="0 0 7 9"><path d="M6 1.3L2.4 4.5L6 7.7" stroke="#5a5a5a" stroke-width="2" fill="none"/></svg>
<svg class="a" style="left:1231px;top:369px" width="7" height="9" viewBox="0 0 7 9"><path d="M1 1.3L4.6 4.5L1 7.7" stroke="#5a5a5a" stroke-width="2" fill="none"/></svg>
<div class="a" style="left:330px;top:130px;width:284px;height:520px;box-shadow:3px 4px 3px -1px rgba(0,0,0,0.32)"></div>
<div class="a" style="left:330px;top:130px;width:284px;height:520px;background:#fcfcfc;border:1px solid #8c8c8c"></div>
<div class="a" style="left:331px;top:131px;width:24px;height:519px;background:linear-gradient(90deg,#fbfbfb,#f0f0f0)"></div>
<div class="mi" style="top:132px;color:#6d6d6d;transform:scaleX(0.957)">Change Selected Parameters</div>
<div class="mi" style="top:154px;color:#000;transform:scaleX(0.949)">Delete Selected Elements</div>
<div class="sep" style="top:179px"></div>
<div class="mi" style="top:182px;color:#000;transform:scaleX(0.95)">Wall Joins</div>
<div class="arr" style="top:189px"></div>
<div class="mi" style="top:204px;color:#000;transform:scaleX(1.011)">Write Orientation</div>
<div class="mi" style="top:226px;color:#000;transform:scaleX(0.984)">Set Location Mark</div>
<div class="arr" style="top:233px"></div>
<div class="sep" style="top:251px"></div>
<div class="mi" style="top:254px;color:#000;transform:scaleX(0.975)">Calculate Elevations</div>
<div class="arr" style="top:261px"></div>
<div class="mi" style="top:276px;color:#000;transform:scaleX(0.971)">Calculate Coordinates X;Y</div>
<div class="arr" style="top:283px"></div>
<div class="mi" style="top:298px;color:#000;transform:scaleX(0.975)">Copy Value</div>
<div class="sep" style="top:323px"></div>
<div class="mi" style="top:326px;color:#6d6d6d;transform:scaleX(0.968)">Calculate Value</div>
<div class="sep" style="top:351px"></div>
<div class="mi" style="top:354px;color:#000;transform:scaleX(0.999)">Select Column</div>
<div class="mi" style="top:376px;color:#000;transform:scaleX(0.959)">Filter by Selected Data</div>
<div class="mi" style="top:398px;color:#000;transform:scaleX(1.001)">Distinct Values in Column</div>
<div class="mi" style="top:420px;color:#000;transform:scaleX(0.982)">Remove All Filters</div>
<div class="mi" style="top:442px;color:#000;transform:scaleX(0.957)">Sort</div>
<div class="sep" style="top:467px"></div>
<div class="mi" style="top:470px;color:#000;transform:scaleX(1.007)">Copy to Clipboard</div>
<div class="sep" style="top:495px"></div>
<div class="mi" style="top:498px;color:#000;transform:scaleX(1.011)">Copy</div>
<div class="mi" style="left:547px;top:498px;color:#000;transform:scaleX(1.03)">Ctrl+C</div>
<div class="mi" style="top:520px;color:#6d6d6d;transform:scaleX(0.955)">Paste</div>
<div class="mi" style="left:547px;top:520px;color:#6d6d6d;transform:scaleX(1.03)">Ctrl+V</div>
<div class="sep" style="top:545px"></div>
<div class="mi" style="top:548px;color:#000;transform:scaleX(0.946)">Refresh View</div>
<div class="mi" style="top:570px;color:#000;transform:scaleX(0.957)">Show Element By ID</div>
<div class="mi" style="top:592px;color:#000;transform:scaleX(0.965)">Isolate Selected Elements In Active View</div>
<div class="mi" style="top:614px;color:#000;transform:scaleX(0.983)">Unhide  Element</div>
</body></html>
